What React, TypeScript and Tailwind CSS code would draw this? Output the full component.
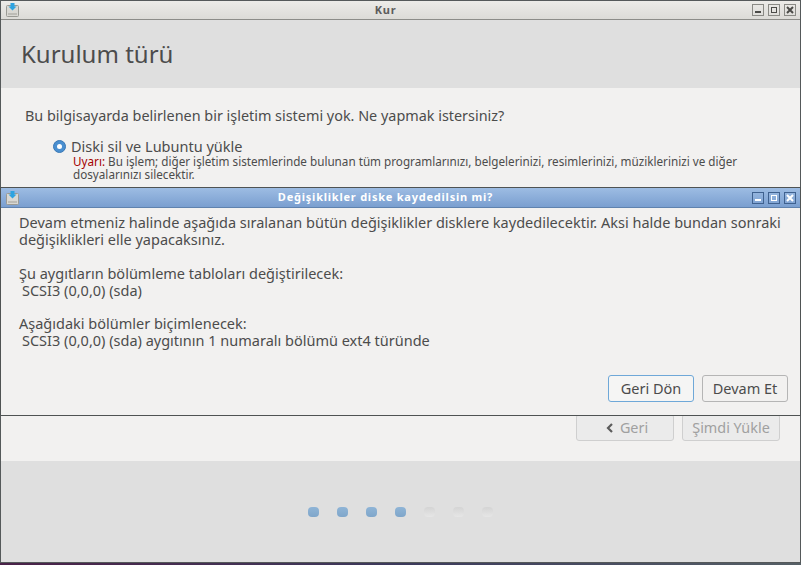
import React from "react";

const font = { fontFamily: '"Noto Sans", "Open Sans", sans-serif' };

const AppIcon = () => (
  <svg width="13" height="14" viewBox="0 0 13 14" className="shrink-0">
    <rect x="0.5" y="2.5" width="12" height="11" rx="1" fill="#d9d8d3" stroke="#9a9a94" />
    <rect x="2" y="10" width="9" height="2" fill="#bdbcb6" />
    <path d="M4.5 0h4v3.5h2l-4 4-4-4h2z" fill="#2ea3e0" />
  </svg>
);

const WinButtons = ({ blue }: { blue?: boolean }) => {
  const box = blue
    ? "flex h-3 w-3 items-center justify-center border border-[#3f618f] text-white"
    : "flex h-3 w-3 items-center justify-center border border-[#8a8a85] text-[#4b4b48]";
  return (
    <div className="flex gap-1">
      <div className={box}>
        <div className="mt-1 h-0.5 w-1.5 bg-current" />
      </div>
      <div className={box}>
        <div className="h-1.5 w-1.5 border border-current" />
      </div>
      <div className={box}>
        <svg width="8" height="8" viewBox="0 0 8 8">
          <path d="M1 1l6 6M7 1L1 7" stroke="currentColor" strokeWidth="2" />
        </svg>
      </div>
    </div>
  );
};

const App: React.FC = () => {
  const dots = [true, true, true, true, false, false, false];
  return (
    <div style={font} className="relative flex h-[565px] w-[801px] flex-col overflow-hidden bg-gradient-to-r from-[#4a2148] via-[#3c3a5c] to-[#566066] text-[#4c4c4c]">
      {/* main window */}
      <div className="flex h-[563px] flex-col border border-[#55595a] border-t-0">
        <div className="flex h-5 items-center justify-between border-y border-t-[#55595a] border-b-[#8c8c88] bg-gradient-to-b from-[#ecebe8] to-[#dcdbd7] pl-[5px] pr-1">
          <AppIcon />
          <span className="text-[11px] font-bold tracking-[0.07em] text-[#5c5c5c]">Kur</span>
          <WinButtons />
        </div>
        <div className="flex h-[68px] items-center bg-[#dfdfdf] pl-5">
          <h1 className="text-[24px] text-[#4c4c4c]">Kurulum türü</h1>
        </div>
        <div className="flex flex-1 flex-col bg-[#f2f1f0] pl-6 pr-5">
          <p className="mt-[13px] text-[14.4px] leading-[30px]">
            Bu bilgisayarda belirlenen bir işletim sistemi yok. Ne yapmak istersiniz?
          </p>
          <div className="mt-[6px] ml-[28px] flex items-center gap-[5px]">
            <div className="flex h-[13px] w-[13px] items-center justify-center rounded-full border border-[#3a78b5] bg-[#4a8fd0]">
              <div className="h-[5px] w-[5px] rounded-full bg-white" />
            </div>
            <span className="text-[14.5px] leading-[18px]">Diski sil ve Lubuntu yükle</span>
          </div>
          <p className="ml-[48px] text-[11.7px] leading-[13px]">
            <span className="text-[#a40000]">Uyarı:</span> Bu işlem; diğer işletim sistemlerinde bulunan tüm programlarınızı, belgelerinizi, resimlerinizi, müziklerinizi ve diğer dosyalarınızı silecektir.
          </p>
          <div className="mt-auto mb-5 flex justify-end gap-2 text-[14.4px] text-[#a0a0a0]">
            <div className="flex h-[27px] w-[98px] items-center justify-center gap-[6px] rounded-[3px] border border-[#cfcfcf] bg-[#ebebeb] pr-0 pl-1">
              <svg width="8" height="10" viewBox="0 0 8 10">
                <path d="M6 1L2 5l4 4" fill="none" stroke="#5c5c5c" strokeWidth="2.2" />
              </svg>
              Geri
            </div>
            <div className="flex h-[27px] w-[98px] items-center justify-center rounded-[3px] border border-[#cfcfcf] bg-[#ebebeb]">
              Şimdi Yükle
            </div>
          </div>
        </div>
        <div className="flex h-[101px] items-start justify-center gap-[18px] bg-[#dfdfdf] pt-[46px]">
          {dots.map((on, i) => (
            <div
              key={i}
              className={
                on
                  ? "h-[10px] w-[11px] rounded-[4px] bg-gradient-to-b from-[#8fb4d6] to-[#7fa6ca]"
                  : "h-[10px] w-[11px] rounded-[4px] bg-gradient-to-b from-[#d4d4d4] to-[#e6e6e6]"
              }
            />
          ))}
        </div>
      </div>

      {/* confirm dialog */}
      <div className="absolute left-0 top-[187px] flex h-[229px] w-[801px] flex-col border border-[#4f5353] bg-[#f2f1f0]">
        <div className="flex h-5 items-center justify-between border-b border-[#5f82ae] bg-gradient-to-b from-[#9dbce3] to-[#7a9fd0] pl-[5px] pr-1">
          <AppIcon />
          <span className="text-[11px] font-bold tracking-[0.07em] text-white">Değişiklikler diske kaydedilsin mi?</span>
          <WinButtons blue />
        </div>
        <div className="flex flex-1 flex-col pl-[18px] pr-[12px] text-[14.5px] leading-[17px]">
          <p className="mt-[6px]">
            Devam etmeniz halinde aşağıda sıralanan bütün değişiklikler disklere kaydedilecektir. Aksi halde bundan sonraki değişiklikleri elle yapacaksınız.
          </p>
          <p className="mt-[17px]">Şu aygıtların bölümleme tabloları değiştirilecek:</p>
          <p className="pl-[3px]">SCSI3 (0,0,0) (sda)</p>
          <p className="mt-4">Aşağıdaki bölümler biçimlenecek:</p>
          <p className="pl-[3px]">SCSI3 (0,0,0) (sda) aygıtının 1 numaralı bölümü ext4 türünde</p>
          <div className="mt-auto mb-[13px] flex justify-end gap-2">
            <div className="flex h-[27px] w-[86px] items-center justify-center rounded-[3px] border border-[#6fa8d8] bg-[#f5f5f4]">Geri Dön</div>
            <div className="flex h-[27px] w-[86px] items-center justify-center rounded-[3px] border border-[#b5b5b5] bg-[#f2f1f0]">Devam Et</div>
          </div>
        </div>
      </div>
    </div>
  );
};

export default App;
